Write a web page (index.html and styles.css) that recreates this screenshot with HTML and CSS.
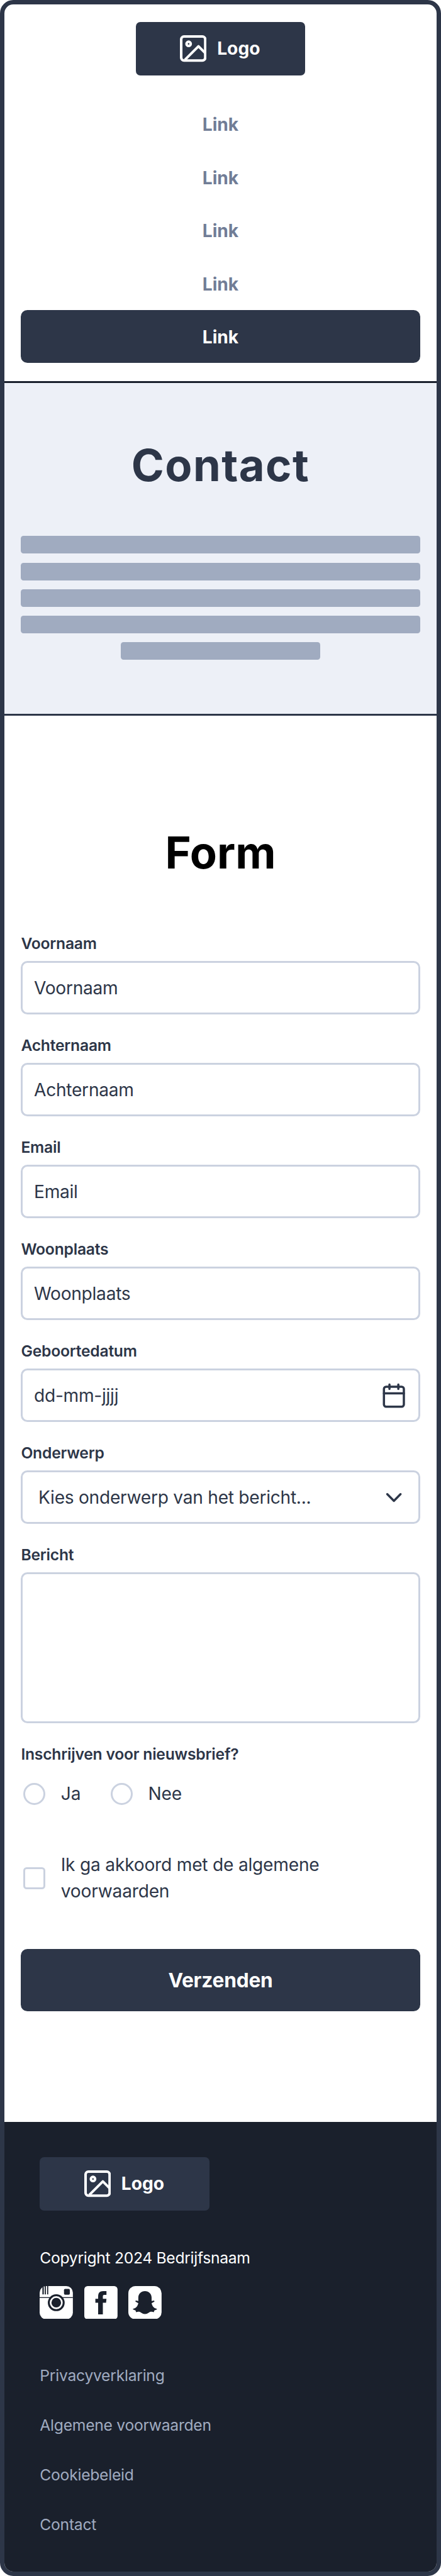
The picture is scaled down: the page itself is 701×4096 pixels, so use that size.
FILE: index.html
```html
<!DOCTYPE html>
<html lang="nl">
<head>
<meta charset="utf-8">
<title>Contact</title>
<link rel="stylesheet" href="styles.css">
</head>
<body>
<div class="frame">
  <header class="header">
    <div class="logo">
      <svg class="logo-icon" viewBox="0 0 48 48" fill="none" stroke="#fff" stroke-width="4.6" stroke-linejoin="round"><rect x="2.300" y="2.300" width="43.400" height="43.400" rx="5"/><circle cx="15.700" cy="15.600" r="3.800"/><path d="M9 44.500 33.500 20 46 32.500"/></svg>
      <span>Logo</span>
    </div>
    <nav class="nav">
      <a class="nav-link">Link</a>
      <a class="nav-link">Link</a>
      <a class="nav-link">Link</a>
      <a class="nav-link">Link</a>
      <a class="nav-link active">Link</a>
    </nav>
  </header>
  <section class="hero">
    <h1 class="title">Contact</h1>
    <div class="lines">
      <i class="line"></i><i class="line"></i><i class="line"></i><i class="line"></i><i class="line short"></i>
    </div>
  </section>
  <main class="main">
    <h2 class="title dark">Form</h2>
    <form class="form">
      <div class="field"><div class="label">Voornaam</div><div class="input">Voornaam</div></div>
      <div class="field"><div class="label">Achternaam</div><div class="input">Achternaam</div></div>
      <div class="field"><div class="label">Email</div><div class="input">Email</div></div>
      <div class="field"><div class="label">Woonplaats</div><div class="input">Woonplaats</div></div>
      <div class="field"><div class="label">Geboortedatum</div><div class="input">dd-mm-jjjj
        <svg class="icon" viewBox="0 0 48 48" fill="none" stroke="#2d3648" stroke-width="4" stroke-linecap="round" stroke-linejoin="round"><rect x="6" y="8" width="36" height="36" rx="4"/><path d="M6 20H42M16 4V12M32 4V12"/></svg></div></div>
      <div class="field"><div class="label">Onderwerp</div><div class="input select">Kies onderwerp van het bericht...
        <svg class="icon" viewBox="0 0 48 48" fill="none" stroke="#2d3648" stroke-width="4" stroke-linecap="round" stroke-linejoin="round"><path d="M12 18 24 30 36 18"/></svg></div></div>
      <div class="field"><div class="label">Bericht</div><div class="input area"></div></div>
      <div class="label">Inschrijven voor nieuwsbrief?</div>
      <div class="radios">
        <div class="option"><i class="radio"></i><span>Ja</span></div>
        <div class="option"><i class="radio"></i><span>Nee</span></div>
      </div>
      <div class="option terms"><i class="check"></i><span>Ik ga akkoord met de algemene<br>voorwaarden</span></div>
      <div class="submit">Verzenden</div>
    </form>
  </main>
  <footer class="footer">
    <div class="logo">
      <svg class="logo-icon" viewBox="0 0 48 48" fill="none" stroke="#fff" stroke-width="4.6" stroke-linejoin="round"><rect x="2.300" y="2.300" width="43.400" height="43.400" rx="5"/><circle cx="15.700" cy="15.600" r="3.800"/><path d="M9 44.500 33.500 20 46 32.500"/></svg>
      <span>Logo</span>
    </div>
    <p class="copy">Copyright 2024 Bedrijfsnaam</p>
    <div class="social">
      <svg viewBox="0 0 60 60"><rect width="60" height="60" rx="12" fill="#fff"/><g fill="#1a202c"><path d="M5 2 7.500 1V15H5zM9.300 0h2V15h-2zM13.500 0h2V15h-2z"/><rect x="44" y="5" width="10.500" height="10.500" rx="2"/><rect y="20" width="60" height="1.500"/><circle cx="30" cy="30" r="15.200"/></g><circle cx="30" cy="30" r="10.200" fill="#1a202c" stroke="#fff" stroke-width="3"/></svg>
      <svg viewBox="0 0 60 60"><rect width="60" height="60" rx="6" fill="#fff"/><path fill="#1a202c" d="M25 51V30H20V23H25V19C25 12 28 9 34 9H40V16H36C34 16 33.500 17 33.500 19V23H40L39.300 30H33.500V51Z"/></svg>
      <svg viewBox="0 0 60 60"><rect width="60" height="60" rx="13" fill="#fff"/><path fill="#1a202c" d="M30 9C37 9 42 14 42 21V27L46 26Q48 27 47 28L42 31C43 36 46 40 51 41Q53 42 50 43L47 44 46 47C42 46 40 46 37 48Q30 53 23 48C20 46 18 46 14 47L13 44 10 43Q7 42 9 41C14 40 17 36 18 31L13 28Q12 26 14 26L18 27V21C18 14 23 9 30 9Z"/></svg>
    </div>
    <ul class="links"><li>Privacyverklaring</li><li>Algemene voorwaarden</li><li>Cookiebeleid</li><li>Contact</li></ul>
  </footer>
</div>
</body>
</html>
```
FILE: styles.css
```css
/* 1rem equals 10 layout units */
html { font-size: 17.61px; background: #fff; }
* { box-sizing: border-box; margin: 0; }
body { font-family: Inter, "Liberation Sans", sans-serif; color: #2d3648; }
svg { display: block; flex: none; }
i { display: block; flex: none; }
.frame { width: 701px; height: 4096px; border: .4rem solid #2d3648; border-radius: 1.2rem; background: #fff; overflow: hidden; display: flex; flex-direction: column; }
.header { height: 34.2rem; flex: none; padding: 1.6rem 1.5rem 0; border-bottom: .2rem solid #1a202c; display: flex; flex-direction: column; align-items: center; gap: 2rem; }
.logo { width: 15.3rem; height: 4.8rem; border-radius: .4rem; background: #2d3648; color: #fff; font-size: 1.6rem; font-weight: 700; display: flex; align-items: center; gap: .95rem; padding-left: 4rem; }
.logo-icon { width: 2.4rem; height: 2.4rem; }
.nav { width: 100%; }
.nav-link { display: flex; align-items: center; justify-content: center; height: 4.8rem; padding-top: .1rem; border-radius: .6rem; color: #717d96; font-size: 1.6rem; font-weight: 700; }
.active { background: #2d3648; color: #fff; }
.hero { height: 30rem; flex: none; background: #edf0f7; border-bottom: .2rem solid #2d3648; padding: 4.95rem 1.5rem 0; }
.title { font-size: 4rem; line-height: 5rem; font-weight: 700; text-align: center; letter-spacing: .02em; }
.dark { color: #000; letter-spacing: 0; }
.lines { margin-top: 3.85rem; display: flex; flex-direction: column; align-items: center; gap: .8rem; }
.line { width: 100%; height: 1.6rem; border-radius: .25rem; background: #a0abc0; }
.short { width: 50%; }
.main { height: 127rem; flex: none; padding: 9.9rem 1.5rem 0; }
.form { padding-top: 4.7rem; letter-spacing: -.01em; }
.field { margin-bottom: 1.8rem; }
.label { font-size: 1.4rem; line-height: 2rem; font-weight: 600; letter-spacing: -.009em; }
.input { margin-top: .6rem; height: 4.8rem; border: .2rem solid #cbd2e0; border-radius: .6rem; padding: 0 1rem; font-size: 1.6rem; letter-spacing: -.01em; display: flex; align-items: center; justify-content: space-between; }
.select { padding-left: 1.4rem; }
.area { height: 13.6rem; }
.icon { width: 2.4rem; height: 2.4rem; }
.radios { display: flex; gap: 2.5rem; margin-top: 1.4rem; }
.option { display: flex; align-items: center; gap: 1.4rem; padding-left: .2rem; font-size: 1.6rem; line-height: 2.4rem; letter-spacing: -.008em; }
.radio, .check { width: 2rem; height: 2rem; border: .2rem solid #cbd2e0; border-radius: 50%; }
.check { border-radius: .3rem; }
.terms { margin-top: 4rem; }
.submit { margin-top: 4rem; height: 5.6rem; border-radius: .6rem; background: #2d3648; color: #fff; display: flex; align-items: center; justify-content: center; font-size: 1.8rem; font-weight: 700; letter-spacing: -.007em; }
.footer { flex: 1; background: #1a202c; color: #fff; padding: 3.2rem; font-size: 1.4rem; line-height: 2rem; }
.copy { margin-top: 3.3rem; letter-spacing: -.012em; }
.social { display: flex; gap: 1rem; margin-top: 1.5rem; }
.social svg { width: 3rem; height: 3rem; }
.links { list-style: none; padding: 0; margin-top: 4.1rem; display: flex; flex-direction: column; gap: 2.5rem; color: #a0abc0; letter-spacing: -.01em; }
```
